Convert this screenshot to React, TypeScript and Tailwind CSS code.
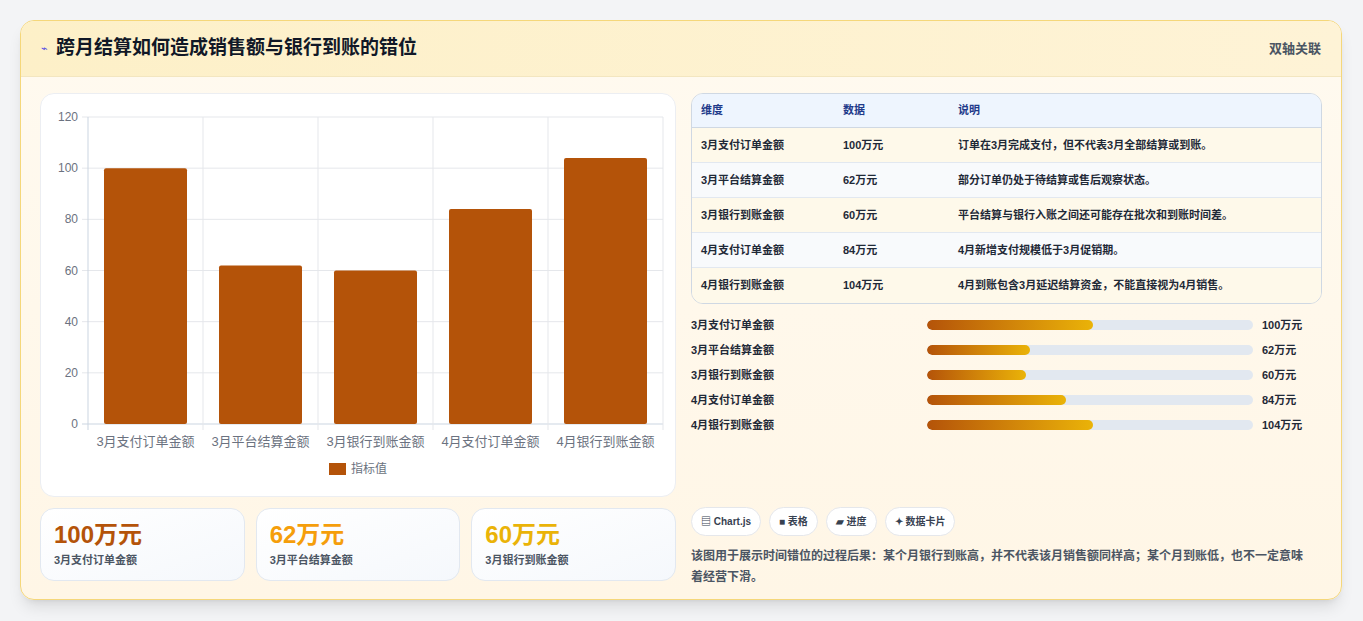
import React from "react";

const cats = ["3月支付订单金额", "3月平台结算金额", "3月银行到账金额", "4月支付订单金额", "4月银行到账金额"];
const vals = [100, 62, 60, 84, 104];
const units = ["100万元", "62万元", "60万元", "84万元", "104万元"];
const notes = [
  "订单在3月完成支付，但不代表3月全部结算或到账。",
  "部分订单仍处于待结算或售后观察状态。",
  "平台结算与银行入账之间还可能存在批次和到账时间差。",
  "4月新增支付规模低于3月促销期。",
  "4月到账包含3月延迟结算资金，不能直接视为4月销售。",
];
const pcts = [51, 31.6, 30.4, 42.6, 51];

function Chart() {
  const x0 = 47, x1 = 622, y0 = 23, y1 = 330;
  const cw = (x1 - x0) / 5;
  const sy = (v: number) => y1 - (v / 120) * (y1 - y0);
  return (
    <svg width="635" height="404" style={{ fontFamily: "'Liberation Sans','Noto Sans CJK SC',sans-serif" }}>
      {[0, 20, 40, 60, 80, 100, 120].map((t) => (
        <g key={t}>
          <line x1={x0 - 6} x2={x1} y1={sy(t)} y2={sy(t)} stroke={t === 0 ? "#cbd5e1" : "#e5e7eb"} />
          <text x={x0 - 10} y={sy(t) + 4} textAnchor="end" fontSize="12" fill="#6b7280">{t}</text>
        </g>
      ))}
      {[0, 1, 2, 3, 4, 5].map((i) => (
        <line key={i} x1={x0 + i * cw} x2={x0 + i * cw} y1={y0} y2={y1 + 6} stroke={i === 0 ? "#cbd5e1" : "#e5e7eb"} />
      ))}
      {vals.map((v, i) => (
        <rect key={i} x={x0 + i * cw + 16} y={sy(v)} width={cw - 32} height={y1 - sy(v)} rx="2" fill="#b45309" />
      ))}
      {cats.map((c, i) => (
        <text key={c} x={x0 + i * cw + cw / 2} y={352} textAnchor="middle" fontSize="13" fill="#6b7280">{c}</text>
      ))}
      <rect x="288" y="369" width="17" height="12" fill="#b45309" />
      <text x="310" y="379" fontSize="12" fill="#6b7280">指标值</text>
    </svg>
  );
}

export default function App() {
  return (
    <div className="w-[1363px] h-[621px] bg-[#f3f4f6] pt-[20px] pl-[20px]" style={{ fontFamily: "'Liberation Sans','Noto Sans CJK SC',sans-serif" }}>
      <div className="w-[1322px] h-[580px] rounded-[14px] border border-[#f5d77a] overflow-hidden bg-gradient-to-b from-[#fffaf0] to-[#fff6e6] shadow-lg flex flex-col">
        <div className="h-[56px] shrink-0 bg-gradient-to-r from-[#fdf0c8] to-[#fef3d6] border-b border-[#f3e6c0] flex items-center justify-between pl-[20px] pr-[20px]">
          <div className="flex items-center gap-[8px]">
            <span className="text-[11px] text-[#4f46e5]">⌁</span>
            <span className="text-[19px] font-bold text-[#111827]">跨月结算如何造成销售额与银行到账的错位</span>
          </div>
          <span className="text-[13px] text-[#4b5563] font-semibold">双轴关联</span>
        </div>
        <div className="flex gap-[15px] px-[19px] pt-[16px]">
          <div className="w-[636px] flex flex-col gap-[11px]">
            <div className="h-[404px] bg-white rounded-[14px] border border-[#eceef2]">
              <Chart />
            </div>
            <div className="flex gap-[11px]">
              {[["100万元", "text-[#b45309]", cats[0]], ["62万元", "text-[#f59e0b]", cats[1]], ["60万元", "text-[#eab308]", cats[2]]].map(([v, c, l]) => (
                <div key={v} className="flex-1 h-[73px] rounded-[14px] border border-[#e2e8f0] bg-gradient-to-br from-white to-[#f5f8fc] pl-[13px] pt-[10px]">
                  <div className={`text-[24px] font-bold leading-[32px] ${c}`}>{v}</div>
                  <div className="text-[11px] text-[#4b5563] font-semibold mt-[1px]">{l}</div>
                </div>
              ))}
            </div>
          </div>
          <div className="w-[634px] flex flex-col">
            <div className="rounded-[12px] border border-[#cfd8e3] overflow-hidden text-[11px] font-semibold text-[#1f2937]">
              <div className="h-[34px] bg-[#eef5fe] flex items-center text-[#1e3a8a] border-b border-[#cfd8e3]">
                <span className="w-[151px] pl-[9px]">维度</span>
                <span className="w-[115px]">数据</span>
                <span>说明</span>
              </div>
              {cats.map((c, i) => (
                <div key={c} className={`h-[35px] flex items-center ${i < 4 ? "border-b border-[#e2e8f0]" : ""} ${i % 2 ? "bg-[#f8fafc]" : "bg-[#fef9ea]"}`}>
                  <span className="w-[151px] pl-[9px]">{c}</span>
                  <span className="w-[115px]">{units[i]}</span>
                  <span>{notes[i]}</span>
                </div>
              ))}
            </div>
            <div className="flex flex-col gap-[9px] mt-[13px]">
              {cats.map((c, i) => (
                <div key={c} className="h-[16px] flex items-center text-[11px] font-bold text-[#1f2937]">
                  <span className="w-[236px]">{c}</span>
                  <div className="w-[326px] h-[10px] rounded-full bg-[#e2e8f0] overflow-hidden">
                    <div className="h-full rounded-full bg-gradient-to-r from-[#b45309] to-[#eab308]" style={{ width: `${pcts[i]}%` }} />
                  </div>
                  <span className="ml-[9px]">{units[i]}</span>
                </div>
              ))}
            </div>
            <div className="flex gap-[8px] mt-[74px] text-[10px] font-semibold text-[#374151]">
              {["▤ Chart.js", "■ 表格", "▰ 进度", "✦ 数据卡片"].map((p) => (
                <span key={p} className="h-[29px] px-[9px] flex items-center rounded-full bg-white border border-[#e5e7eb]">{p}</span>
              ))}
            </div>
            <p className="mt-[10px] text-[12px] leading-[21px] text-[#4b5563] font-semibold w-[620px]">
              该图用于展示时间错位的过程后果：某个月银行到账高，并不代表该月销售额同样高；某个月到账低，也不一定意味着经营下滑。
            </p>
          </div>
        </div>
      </div>
    </div>
  );
}
